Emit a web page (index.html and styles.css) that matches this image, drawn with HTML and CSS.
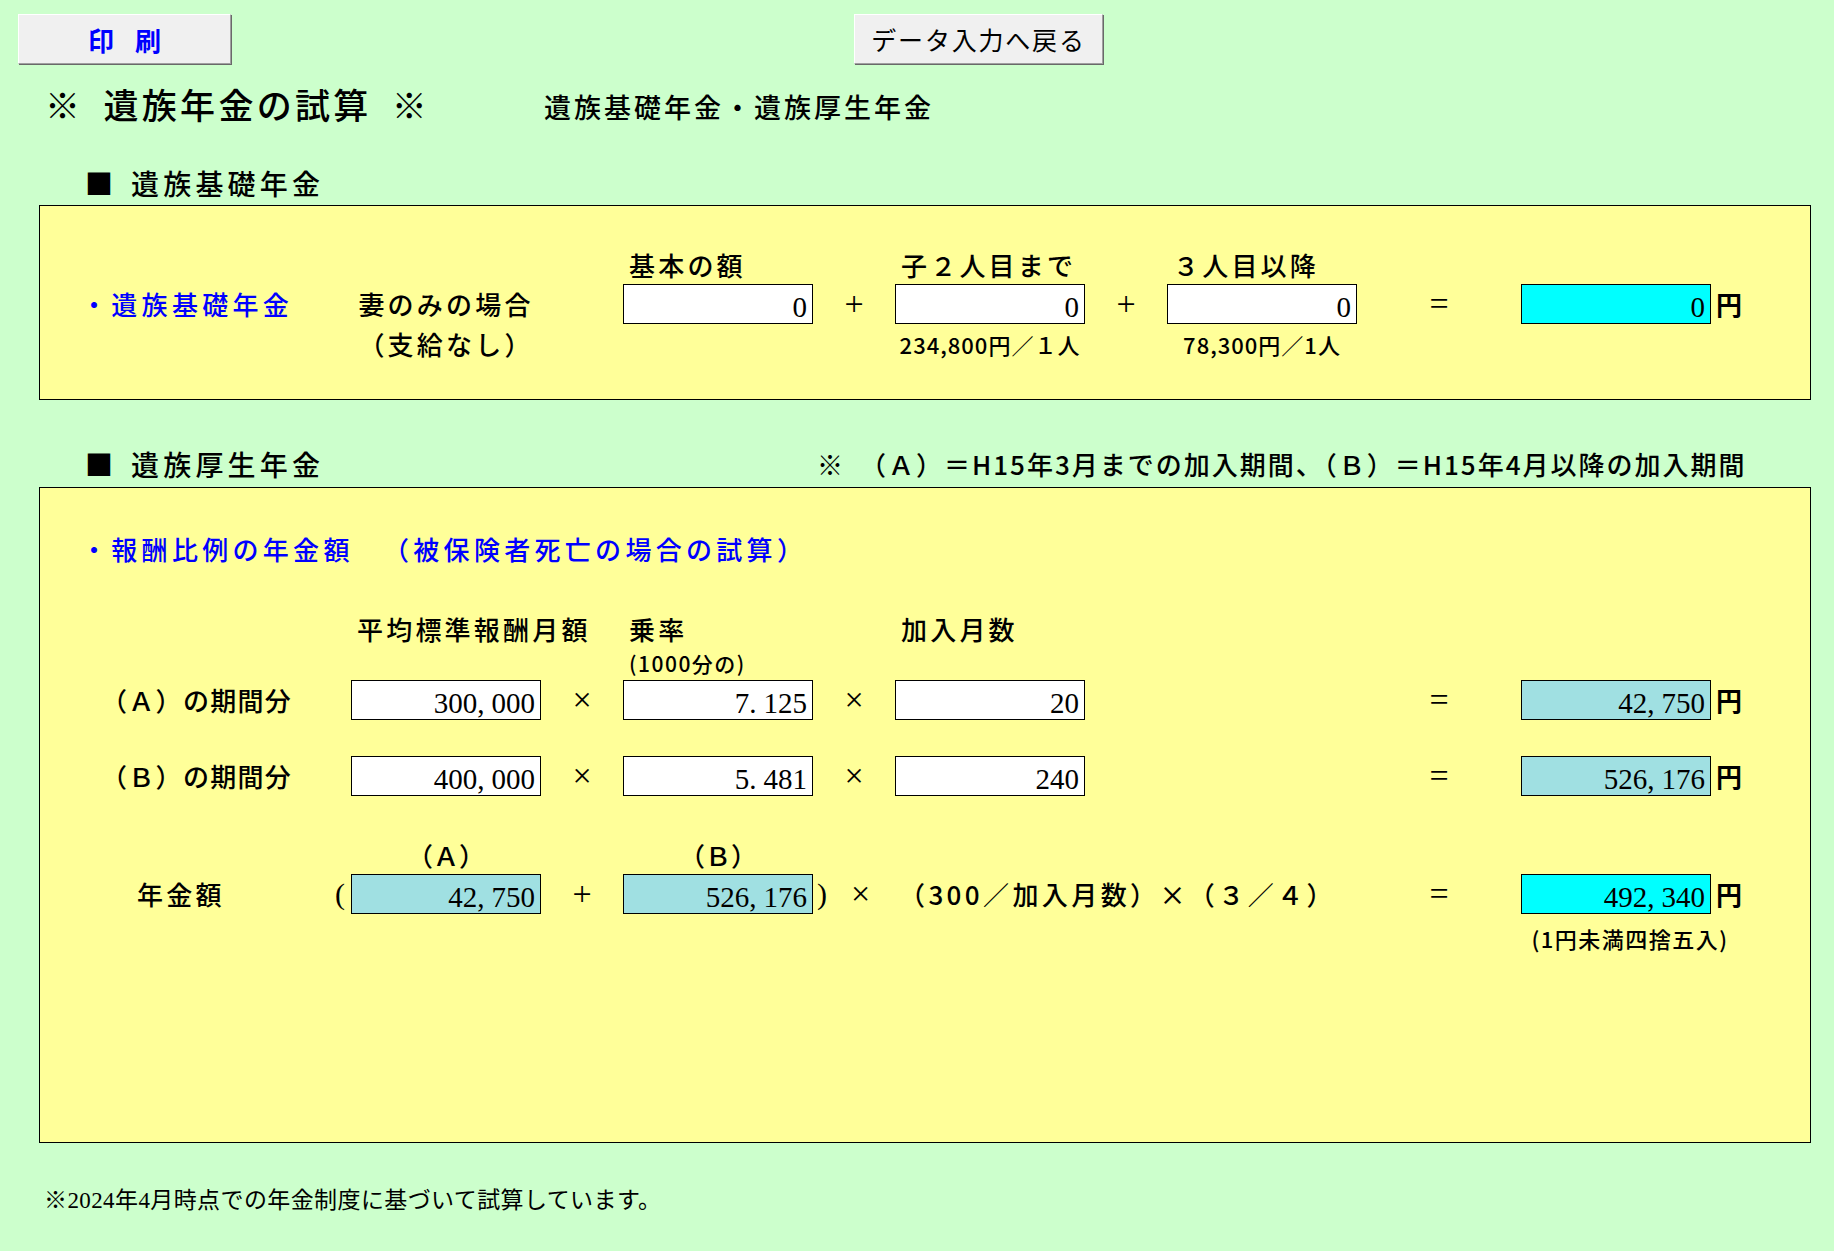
FILE: index.html
```html
<!DOCTYPE html>
<html lang="ja">
<head>
<meta charset="utf-8">
<title>遺族年金の試算</title>
<link rel="stylesheet" href="styles.css">
</head>
<body>
<div class="toolbar">
  <button class="btn btn-print" type="button">印 刷</button>
  <button class="btn btn-back" type="button">データ入力へ戻る</button>
</div>

<div class="title-row">
  <h1 class="title">※ 遺族年金の試算 ※</h1>
  <div class="subtitle">遺族基礎年金・遺族厚生年金</div>
</div>

<div class="head-row">
  <h2 class="section-head"><span class="sq">■</span>遺族基礎年金</h2>
</div>
<section class="box box-basic">
  <div class="row row-text">
    <div class="c1 txt lt">基本の額</div>
    <div class="c2 txt lt">子２人目まで</div>
    <div class="c3 txt lt">３人目以降</div>
  </div>
  <div class="row row-field">
    <div class="lab txt blue lab-blue">・遺族基礎年金</div>
    <div class="c0 txt ct">妻のみの場合</div>
    <div class="c1 field">0</div>
    <div class="o1 op">+</div>
    <div class="c2 field">0</div>
    <div class="o2 op">+</div>
    <div class="c3 field">0</div>
    <div class="eq op">=</div>
    <div class="out field total">0</div>
    <div class="unit">円</div>
  </div>
  <div class="row row-text row-notes">
    <div class="c0 txt ct">（支給なし）</div>
    <div class="c2 small ct">234,800円／１人</div>
    <div class="c3 small ct">78,300円／1人</div>
  </div>
</section>

<div class="head-row head-row-2">
  <h2 class="section-head"><span class="sq">■</span>遺族厚生年金</h2>
  <div class="head-note">※　（Ａ）＝H15年3月までの加入期間、（Ｂ）＝H15年4月以降の加入期間</div>
</div>
<section class="box box-employee">
  <div class="row row-text">
    <div class="all txt blue lab-blue">・報酬比例の年金額<span class="gap">　</span>（被保険者死亡の場合の試算）</div>
  </div>
  <div class="row row-text row-head">
    <div class="c0 txt lt">平均標準報酬月額</div>
    <div class="c1 txt lt">乗率</div>
    <div class="c2 txt lt">加入月数</div>
  </div>
  <div class="row row-sub">
    <div class="c1 tiny lt">(1000分の)</div>
  </div>
  <div class="row row-field row-a">
    <div class="lab txt lab-period">（Ａ）の期間分</div>
    <div class="c0 field">300<span class="cm">,</span>000</div>
    <div class="o0 op">×</div>
    <div class="c1 field">7<span class="cm">.</span>125</div>
    <div class="o1 op">×</div>
    <div class="c2 field">20</div>
    <div class="eq op">=</div>
    <div class="out field calc">42<span class="cm">,</span>750</div>
    <div class="unit">円</div>
  </div>
  <div class="row row-field row-b">
    <div class="lab txt lab-period">（Ｂ）の期間分</div>
    <div class="c0 field">400<span class="cm">,</span>000</div>
    <div class="o0 op">×</div>
    <div class="c1 field">5<span class="cm">.</span>481</div>
    <div class="o1 op">×</div>
    <div class="c2 field">240</div>
    <div class="eq op">=</div>
    <div class="out field calc">526<span class="cm">,</span>176</div>
    <div class="unit">円</div>
  </div>
  <div class="row row-text row-ab">
    <div class="c0 txt ct tight">（Ａ）</div>
    <div class="c1 txt ct tight">（Ｂ）</div>
  </div>
  <div class="row row-field row-total">
    <div class="lab lab-total"><span class="txt">年金額</span><span class="paren">(</span></div>
    <div class="c0 field calc">42<span class="cm">,</span>750</div>
    <div class="o0 op">+</div>
    <div class="c1 field calc">526<span class="cm">,</span>176</div>
    <div class="o1 op-close"><span class="paren">)</span><span class="op-x">×</span></div>
    <div class="c2-3 txt formula">（300／加入月数）×（３／４）</div>
    <div class="eq op">=</div>
    <div class="out field total">492<span class="cm">,</span>340</div>
    <div class="unit">円</div>
  </div>
  <div class="row row-round">
    <div class="out-unit small ct round">(1円未満四捨五入)</div>
  </div>
</section>

<p class="footer">※2024年4月時点での年金制度に基づいて試算しています。</p>
</body>
</html>
```

FILE: styles.css
```css
* {
  box-sizing: border-box;
  margin: 0;
  padding: 0;
}

html,
body {
  background: #ccffcc;
}

body {
  width: 1834px;
  min-height: 1251px;
  font-family: "Noto Sans CJK JP", "Noto Sans", sans-serif;
  color: #000;
  font-weight: 500;
}

/* toolbar */
.toolbar {
  display: flex;
  height: 64px;
  padding: 14px 0 0 18px;
}

.btn {
  height: 50px;
  display: flex;
  align-items: center;
  justify-content: center;
  background: #f0f0f0;
  border: 1px solid;
  border-color: #ffffff #a0a0a0 #a0a0a0 #ffffff;
  box-shadow: 1px 1px 0 #696969;
  font-family: "Noto Sans CJK JP", sans-serif;
  color: #000;
  cursor: pointer;
}

.btn-print {
  width: 213px;
  color: #0000ff;
  font-size: 26px;
  font-weight: 700;
  word-spacing: 15px;
}

.btn-back {
  width: 249px;
  margin-left: 623px;
  font-size: 25px;
  font-weight: 400;
  letter-spacing: 1.8px;
}

/* title */
.title-row {
  display: grid;
  grid-template-columns: 497px auto;
  height: 40px;
  margin-top: 20px;
  padding-left: 45px;
}

.title {
  font-size: 35px;
  line-height: 40px;
  font-weight: 500;
  letter-spacing: 3.3px;
  word-spacing: 9px;
  white-space: nowrap;
}

.subtitle {
  padding-top: 7px;
  padding-left: 2px;
  font-size: 27px;
  line-height: 32px;
  letter-spacing: 3px;
  white-space: nowrap;
}

/* section heads */
.head-row {
  display: grid;
  grid-template-columns: 732px auto;
  align-items: center;
  height: 36px;
  margin-top: 41px;
  margin-bottom: 4px;
  padding-left: 85px;
}

.head-row-2 {
  margin-top: 46px;
  margin-bottom: 5px;
}

.section-head {
  font-size: 28px;
  line-height: 36px;
  font-weight: 500;
  letter-spacing: 4.2px;
  white-space: nowrap;
}

.sq {
  margin-right: 18px;
  letter-spacing: 0;
}

.head-note {
  font-size: 26px;
  line-height: 36px;
  letter-spacing: 2px;
  white-space: nowrap;
}

/* boxes */
.box {
  width: 1772px;
  margin-left: 39px;
  background: #ffff99;
  border: 1px solid #000;
  padding-left: 44px;
}

.box-basic {
  padding-top: 44px;
  padding-bottom: 40px;
}

.box-employee {
  padding-top: 46px;
  padding-bottom: 191px;
}

.row {
  display: grid;
  grid-template-columns: 267px 190px 82px 190px 82px 190px 82px 190px 164px 190px 40px;
  align-items: center;
}

.row-text {
  height: 30px;
}

.row-field {
  height: 40px;
  margin-top: 2px;
}

.row-notes {
  margin-top: 7px;
}

.row-head {
  margin-top: 50px;
}

.row-sub {
  height: 24px;
  margin-top: 7px;
}

.row-a {
  margin-top: 3px;
}

.row-b {
  margin-top: 36px;
}

.row-ab {
  margin-top: 46px;
}

.row-total {
  margin-top: 2px;
}

.row-round {
  height: 26px;
  margin-top: 13px;
}

/* grid placement */
.lab { grid-column: 1; }
.all { grid-column: 1 / -1; }
.c0 { grid-column: 2; }
.o0 { grid-column: 3; }
.c1 { grid-column: 4; }
.o1 { grid-column: 5; }
.c2 { grid-column: 6; }
.o2 { grid-column: 7; }
.c3 { grid-column: 8; }
.c2-3 { grid-column: 6 / 9; }
.eq { grid-column: 9; }
.out { grid-column: 10; }
.unit { grid-column: 11; }
.out-unit { grid-column: 10 / 12; }

/* text */
.txt {
  font-size: 26px;
  line-height: 30px;
  letter-spacing: 3.2px;
  white-space: nowrap;
}

.tight {
  letter-spacing: 0;
}

.lt {
  padding-left: 6px;
}

.ct {
  text-align: center;
}

.blue {
  color: #0000ff;
}

.lab-blue {
  margin-left: -3px;
  letter-spacing: 4.3px;
}

.gap {
  margin-right: 12px;
}

.lab-period {
  padding-left: 17px;
  letter-spacing: 1.3px;
}

.small {
  font-size: 22px;
  line-height: 26px;
  letter-spacing: 1px;
  white-space: nowrap;
}

.round {
  letter-spacing: 1.5px;
  padding-right: 12px;
}

.tiny {
  font-size: 21px;
  line-height: 24px;
  letter-spacing: 1.5px;
  white-space: nowrap;
}

/* fields */
.field {
  height: 40px;
  border: 1px solid #000;
  background: #fff;
  font-family: "Liberation Serif", serif;
  font-size: 29px;
  font-weight: 400;
  line-height: 44px;
  text-align: right;
  padding-right: 5px;
  white-space: nowrap;
}

.field.calc {
  background: #a0e0e2;
}

.field.total {
  background: #00ffff;
}

.cm {
  margin-right: 7px;
}

.op {
  font-family: "Liberation Serif", serif;
  font-size: 34px;
  font-weight: 400;
  line-height: 44px;
  text-align: center;
}

.unit {
  padding-left: 5px;
  font-size: 26px;
  font-weight: 700;
  line-height: 40px;
}

/* total row */
.lab-total {
  display: flex;
  justify-content: space-between;
  align-items: center;
  padding-left: 53px;
  padding-right: 6px;
}

.paren {
  font-family: "Liberation Serif", serif;
  font-size: 30px;
  font-weight: 400;
  line-height: 40px;
}

.op-close {
  display: flex;
  align-items: center;
  padding-left: 4px;
}

.op-x {
  margin-left: 24px;
  font-family: "Liberation Serif", serif;
  font-size: 34px;
  font-weight: 400;
  line-height: 44px;
}

.formula {
  padding-left: 4px;
  letter-spacing: 3.4px;
}

/* footer */
.footer {
  margin: 43px 0 0 44px;
  font-family: "Liberation Serif", "Noto Sans CJK JP", serif;
  font-size: 23px;
  font-weight: 400;
  line-height: 30px;
  letter-spacing: 0.4px;
  white-space: nowrap;
}
```
